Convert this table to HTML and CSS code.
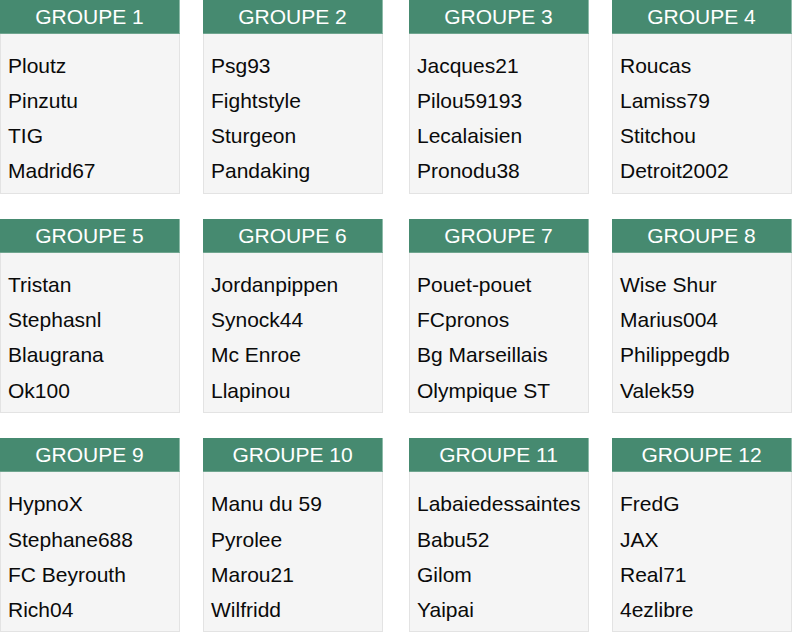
FILE: index.html
```html
<!DOCTYPE html>
<html lang="fr">
<head>
<meta charset="utf-8">
<title>Groupes</title>
<link rel="stylesheet" href="styles.css">
</head>
<body>
<div class="groups">
  <section class="card"><h2 class="card-head">GROUPE 1</h2><ul class="card-body"><li>Ploutz</li><li>Pinzutu</li><li>TIG</li><li>Madrid67</li></ul></section>
  <section class="card"><h2 class="card-head">GROUPE 2</h2><ul class="card-body"><li>Psg93</li><li>Fightstyle</li><li>Sturgeon</li><li>Pandaking</li></ul></section>
  <section class="card"><h2 class="card-head">GROUPE 3</h2><ul class="card-body"><li>Jacques21</li><li>Pilou59193</li><li>Lecalaisien</li><li>Pronodu38</li></ul></section>
  <section class="card"><h2 class="card-head">GROUPE 4</h2><ul class="card-body"><li>Roucas</li><li>Lamiss79</li><li>Stitchou</li><li>Detroit2002</li></ul></section>
  <section class="card"><h2 class="card-head">GROUPE 5</h2><ul class="card-body"><li>Tristan</li><li>Stephasnl</li><li>Blaugrana</li><li>Ok100</li></ul></section>
  <section class="card"><h2 class="card-head">GROUPE 6</h2><ul class="card-body"><li>Jordanpippen</li><li>Synock44</li><li>Mc Enroe</li><li>Llapinou</li></ul></section>
  <section class="card"><h2 class="card-head">GROUPE 7</h2><ul class="card-body"><li>Pouet-pouet</li><li>FCpronos</li><li>Bg Marseillais</li><li>Olympique ST</li></ul></section>
  <section class="card"><h2 class="card-head">GROUPE 8</h2><ul class="card-body"><li>Wise Shur</li><li>Marius004</li><li>Philippegdb</li><li>Valek59</li></ul></section>
  <section class="card"><h2 class="card-head">GROUPE 9</h2><ul class="card-body"><li>HypnoX</li><li>Stephane688</li><li>FC Beyrouth</li><li>Rich04</li></ul></section>
  <section class="card"><h2 class="card-head">GROUPE 10</h2><ul class="card-body"><li>Manu du 59</li><li>Pyrolee</li><li>Marou21</li><li>Wilfridd</li></ul></section>
  <section class="card"><h2 class="card-head">GROUPE 11</h2><ul class="card-body"><li>Labaiedessaintes</li><li>Babu52</li><li>Gilom</li><li>Yaipai</li></ul></section>
  <section class="card"><h2 class="card-head">GROUPE 12</h2><ul class="card-body"><li>FredG</li><li>JAX</li><li>Real71</li><li>4ezlibre</li></ul></section>
</div>
</body>
</html>
```
FILE: styles.css
```css
html, body {
  margin: 0;
  padding: 0;
  background: #ffffff;
  font-family: "Liberation Sans", Arial, sans-serif;
}
.groups {
  display: grid;
  grid-template-columns: 203px 206px 203px 180px;
  row-gap: 25.4px;
  width: 792px;
  margin-top: -0.5px;
}
.card {
  width: 180px;
  height: 194px;
  box-sizing: border-box;
  display: flex;
  flex-direction: column;
}
.card-head {
  margin: 0;
  height: 34px;
  box-sizing: border-box;
  background: #468a70;
  border-right: 1px solid #8dbba9;
  border-bottom: 1px solid #6fa58f;
  color: #ffffff;
  font-weight: normal;
  font-size: 21px;
  line-height: 34px;
  text-align: center;
}
.card-body {
  flex: 1;
  margin: 0;
  list-style: none;
  padding: 14px 7px 0 7px;
  background: #f5f5f5;
  border: 1px solid #e3e3e3;
  border-top: none;
}
.card-body li {
  font-size: 21px;
  line-height: 35.3px;
  color: #0a0a0a;
  white-space: nowrap;
}
```
